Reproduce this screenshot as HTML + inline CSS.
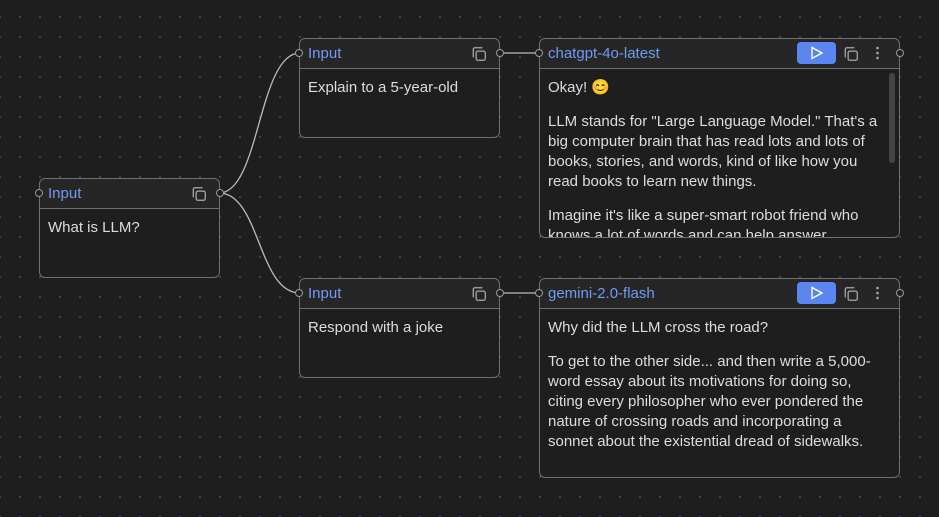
<!DOCTYPE html><html><head><style>
body{margin:0;width:939px;height:517px;overflow:hidden;background-color:#1e1e1e;background-image:radial-gradient(circle,#3d4a66 0.8px,transparent 1.2px);background-size:20px 20px;background-position:-10px 7px;font-family:"Liberation Sans",sans-serif;position:relative}
.n{position:absolute;border:1px solid #707070;border-radius:6px;background:#1e1e1e;box-sizing:border-box}
.h{height:29px;border-bottom:1px solid #707070;background:#262626;border-radius:6px 6px 0 0;display:flex;align-items:center;padding-left:8px;color:#6f9cf5;font-size:15px;position:relative}
.b{padding:9px 8px;color:#ddd;font-size:15px;line-height:20px}
.b p{margin:0 0 14px}
.cp{position:absolute;top:7px;width:16px;height:16px}
.port{position:absolute;width:6px;height:6px;border:1px solid #999;border-radius:50%;background:#1e1e1e;top:10px}
.play{position:absolute;top:3px;width:39px;height:22px;background:#5b86f0;border-radius:4px}
.dots{position:absolute;top:7px;width:3px;color:#999}
.sb{position:absolute;right:4px;top:34px;width:6px;height:90px;background:#444;border-radius:3px}
</style></head><body>
<svg width="939" height="517" style="position:absolute;left:0;top:0">
<g fill="none" stroke="#bbb" stroke-width="1.3">
<path d="M219 193 C260 193 258 53 300 53"/>
<path d="M219 193 C260 193 258 293 300 293"/>
<path d="M499 53 L540 53"/><path d="M499 293 L540 293"/>
</g></svg>

<div class="n" style="left:39px;top:178px;width:181px;height:100px">
<div class="h">Input<svg class="cp" style="right:12px" viewBox="0 0 14 14" fill="none" stroke="#aaa" stroke-width="1.1"><rect x="4.5" y="4.5" width="8" height="8" rx="1.5"/><path d="M2 10V3a1.5 1.5 0 0 1 1.5-1.5H10"/></svg>
<div class="port" style="left:-5px"></div><div class="port" style="right:-5px"></div></div>
<div class="b">What is LLM?</div></div>

<div class="n" style="left:299px;top:38px;width:201px;height:100px">
<div class="h">Input<svg class="cp" style="right:12px" viewBox="0 0 14 14" fill="none" stroke="#aaa" stroke-width="1.1"><rect x="4.5" y="4.5" width="8" height="8" rx="1.5"/><path d="M2 10V3a1.5 1.5 0 0 1 1.5-1.5H10"/></svg>
<div class="port" style="left:-5px"></div><div class="port" style="right:-5px"></div></div>
<div class="b">Explain to a 5-year-old</div></div>

<div class="n" style="left:299px;top:278px;width:201px;height:100px">
<div class="h">Input<svg class="cp" style="right:12px" viewBox="0 0 14 14" fill="none" stroke="#aaa" stroke-width="1.1"><rect x="4.5" y="4.5" width="8" height="8" rx="1.5"/><path d="M2 10V3a1.5 1.5 0 0 1 1.5-1.5H10"/></svg>
<div class="port" style="left:-5px"></div><div class="port" style="right:-5px"></div></div>
<div class="b">Respond with a joke</div></div>

<div class="n" style="left:539px;top:38px;width:361px;height:200px">
<div class="h">chatgpt-4o-latest
<div class="play" style="right:63px"><svg width="39" height="22"><path d="M15 5.5L25 11L15 16.5Z" fill="none" stroke="#fff" stroke-width="1.4"/></svg></div>
<svg class="cp" style="right:40px" viewBox="0 0 14 14" fill="none" stroke="#aaa" stroke-width="1.1"><rect x="4.5" y="4.5" width="8" height="8" rx="1.5"/><path d="M2 10V3a1.5 1.5 0 0 1 1.5-1.5H10"/></svg>
<svg class="dots" style="right:20px" width="3" height="14"><circle cx="1.5" cy="2" r="1.3" fill="#aaa"/><circle cx="1.5" cy="7" r="1.3" fill="#aaa"/><circle cx="1.5" cy="12" r="1.3" fill="#aaa"/></svg>
<div class="port" style="left:-5px"></div><div class="port" style="right:-5px"></div></div>
<div style="height:168px;overflow:hidden;position:relative"><div class="b" style="padding-right:18px"><p>Okay! <span style="color:#f5a623">😊</span></p><p>LLM stands for "Large Language Model." That's a big computer brain that has read lots and lots of books, stories, and words, kind of like how you read books to learn new things.</p><p>Imagine it's like a super-smart robot friend who knows a lot of words and can help answer</p></div></div>
<div class="sb"></div></div>

<div class="n" style="left:539px;top:278px;width:361px;height:200px">
<div class="h">gemini-2.0-flash
<div class="play" style="right:63px"><svg width="39" height="22"><path d="M15 5.5L25 11L15 16.5Z" fill="none" stroke="#fff" stroke-width="1.4"/></svg></div>
<svg class="cp" style="right:40px" viewBox="0 0 14 14" fill="none" stroke="#aaa" stroke-width="1.1"><rect x="4.5" y="4.5" width="8" height="8" rx="1.5"/><path d="M2 10V3a1.5 1.5 0 0 1 1.5-1.5H10"/></svg>
<svg class="dots" style="right:20px" width="3" height="14"><circle cx="1.5" cy="2" r="1.3" fill="#aaa"/><circle cx="1.5" cy="7" r="1.3" fill="#aaa"/><circle cx="1.5" cy="12" r="1.3" fill="#aaa"/></svg>
<div class="port" style="left:-5px"></div><div class="port" style="right:-5px"></div></div>
<div class="b" style="padding-right:12px"><p>Why did the LLM cross the road?</p><p>To get to the other side... and then write a 5,000-word essay about its motivations for doing so, citing every philosopher who ever pondered the nature of crossing roads and incorporating a sonnet about the existential dread of sidewalks.</p></div></div>
</body></html>
